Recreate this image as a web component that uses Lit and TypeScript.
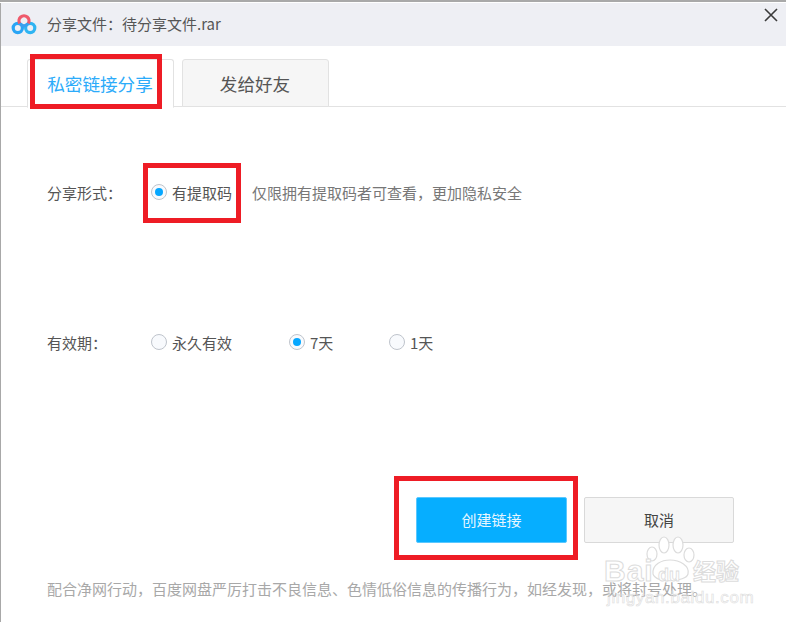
import { LitElement, html, css } from "lit";
import { customElement } from "lit/decorators.js";

const logo = html`<svg class="logo" width="26" height="22" viewBox="0 0 26 22" fill="none">
  <circle cx="6.8" cy="14" r="4.6" stroke="#2aa5f5" stroke-width="3.2"/>
  <circle cx="19.2" cy="14" r="4.6" stroke="#2fb4f2" stroke-width="3.2"/>
  <path d="M8.8 9.5 A5 5 0 1 1 17.2 9.5" stroke="#ef5a6c" stroke-width="3.2"/>
  <path d="M8.8 9.5 Q13 14 17.2 9.5" stroke="#3aa0ee" stroke-width="3"/>
</svg>`;

@customElement("app-root")
export class AppRoot extends LitElement {
  static styles = css`
    :host { display: block; position: relative; width: 786px; height: 622px; overflow: hidden; background: #fff;
      font-family: "Noto Sans CJK SC", "Liberation Sans", sans-serif; font-size: 15px; color: #555; }
    .strip { height: 2px; background: #a9a9a9; }
    .gap { height: 1px; background: #fff; }
    .window { border-left: 1px solid #a8a8a8; height: 619px; box-sizing: border-box; display: flex; flex-direction: column; }
    .title { height: 43px; flex: none; background: #eeeff4; display: flex; align-items: center; padding: 0 8px 0 10px; gap: 10px; font-size: 15px; color: #555; }
    .logo { flex: none; margin-top: 1px; }
    .title .name { flex: 1; padding-bottom: 2px; }
    .close { flex: none; margin-bottom: 19px; }
    .tabs { height: 61px; flex: none; box-sizing: border-box; padding: 13px 0 0 26px; display: flex; gap: 8px; border-bottom: 1px solid #e2e2e2; }
    .tab { width: 147px; height: 48px; box-sizing: border-box; border: 1px solid #e2e2e2; border-radius: 3px 3px 0 0; display: flex; align-items: center; justify-content: center; font-size: 17.6px; color: #555; background: #f6f6f6; padding-right: 1px; }
    .tab.on { background: #fff; color: #2cabfa; border-bottom-color: #fff; height: 49px; }
    .body { flex: 1; display: flex; flex-direction: column; padding: 0 0 0 46px; }
    .row { display: flex; align-items: center; height: 22px; }
    .r1 { margin-top: 74px; }
    .r2 { margin-top: 128px; }
    .label { width: 104px; flex: none; }
    .opt { display: flex; align-items: center; gap: 5px; }
    .o1 { width: 138px; }
    .o2 { width: 100px; }
    .radio { width: 16px; height: 16px; box-sizing: border-box; border: 1px solid #bfc4cc; border-radius: 50%; background: #f8fafd; display: flex; align-items: center; justify-content: center; flex: none; }
    .radio.on::after { content: ""; width: 8px; height: 8px; border-radius: 50%; background: #06a7ff; }
    .hint { color: #777; margin-left: 20px; }
    .actions { display: flex; gap: 17px; margin: 144px 0 0 369px; }
    .btn { height: 46px; box-sizing: border-box; border-radius: 2px; display: flex; align-items: center; justify-content: center; font-size: 15px; padding-bottom: 2px; }
    .primary { width: 151px; background: #06aeff; color: #e6f6ff; border: 1px solid #5ac8ff; }
    .cancel { width: 150px; background: #f6f6f6; color: #444; border: 1px solid #d9d9d9; }
    .note { margin-top: 36px; color: #a8a8a8; white-space: nowrap; line-height: 20px; }
    .mark { position: absolute; border: 5px solid #ee1c25; box-sizing: border-box; pointer-events: none; }
    .m1 { left: 30px; top: 54px; width: 132px; height: 55px; }
    .m2 { left: 143px; top: 163px; width: 98px; height: 60px; }
    .m3 { left: 394px; top: 476px; width: 184px; height: 84px; }
    .wm { position: absolute; left: 598px; top: 536px; width: 166px; height: 76px; pointer-events: none; }
    .wm svg { position: absolute; left: 0; top: 0; }
    .wm-b { position: absolute; left: 6px; top: 18px; font: 700 30px/34px "Liberation Sans", sans-serif; color: #fff; -webkit-text-stroke: 1px #dcdcdc; letter-spacing: 1px; }
    .wm-d { position: absolute; left: 60px; top: 28px; font: 700 18px/22px "Liberation Sans", sans-serif; color: #fff; -webkit-text-stroke: .8px #dcdcdc; }
    .wm-c { position: absolute; left: 95px; top: 18px; font: 700 23px/32px "Noto Sans CJK SC", sans-serif; color: #fff; -webkit-text-stroke: 1px #dcdcdc; }
    .wm-u { position: absolute; left: 9px; top: 52px; font: 400 17px/20px "Liberation Sans", sans-serif; color: transparent; -webkit-text-stroke: 0.6px #dcdcdc; letter-spacing: .6px; }
  `;

  render() {
    return html`
      <div class="strip"></div>
      <div class="gap"></div>
      <div class="window">
        <div class="title">
          ${logo}
          <div class="name">分享文件：待分享文件.rar</div>
          <svg class="close" width="14" height="14" viewBox="0 0 14 14" fill="none" stroke="#3a3a3a" stroke-width="1.6">
            <path d="M1 1 L13 13 M13 1 L1 13"/>
          </svg>
        </div>
        <div class="tabs">
          <div class="tab on">私密链接分享</div>
          <div class="tab">发给好友</div>
        </div>
        <div class="body">
          <div class="row r1">
            <div class="label">分享形式：</div>
            <div class="opt"><span class="radio on"></span><span>有提取码</span></div>
            <div class="hint">仅限拥有提取码者可查看，更加隐私安全</div>
          </div>
          <div class="row r2">
            <div class="label">有效期：</div>
            <div class="opt o1"><span class="radio"></span><span>永久有效</span></div>
            <div class="opt o2"><span class="radio on"></span><span>7天</span></div>
            <div class="opt"><span class="radio"></span><span>1天</span></div>
          </div>
          <div class="actions">
            <div class="btn primary">创建链接</div>
            <div class="btn cancel">取消</div>
          </div>
          <div class="note">配合净网行动，百度网盘严厉打击不良信息、色情低俗信息的传播行为，如经发现，或将封号处理。</div>
        </div>
      </div>
      <div class="mark m1"></div>
      <div class="mark m2"></div>
      <div class="mark m3"></div>
      <div class="wm">
        <svg width="166" height="60" viewBox="0 0 166 60" fill="#fff" stroke="#dcdcdc" stroke-width="1.2">
          <ellipse cx="54" cy="18" rx="5" ry="7"/>
          <ellipse cx="66" cy="9" rx="5" ry="8"/>
          <ellipse cx="80" cy="9" rx="5" ry="8"/>
          <ellipse cx="91" cy="19" rx="5" ry="7"/>
          <path d="M55 38 C54 28 64 24 72 24 C82 24 92 30 90 38 C88 46 58 48 55 38 Z"/>
        </svg>
        <div class="wm-b">Bai</div>
        <div class="wm-d">du</div>
        <div class="wm-c">经验</div>
        <div class="wm-u">jingyan.baidu.com</div>
      </div>
    `;
  }
}
